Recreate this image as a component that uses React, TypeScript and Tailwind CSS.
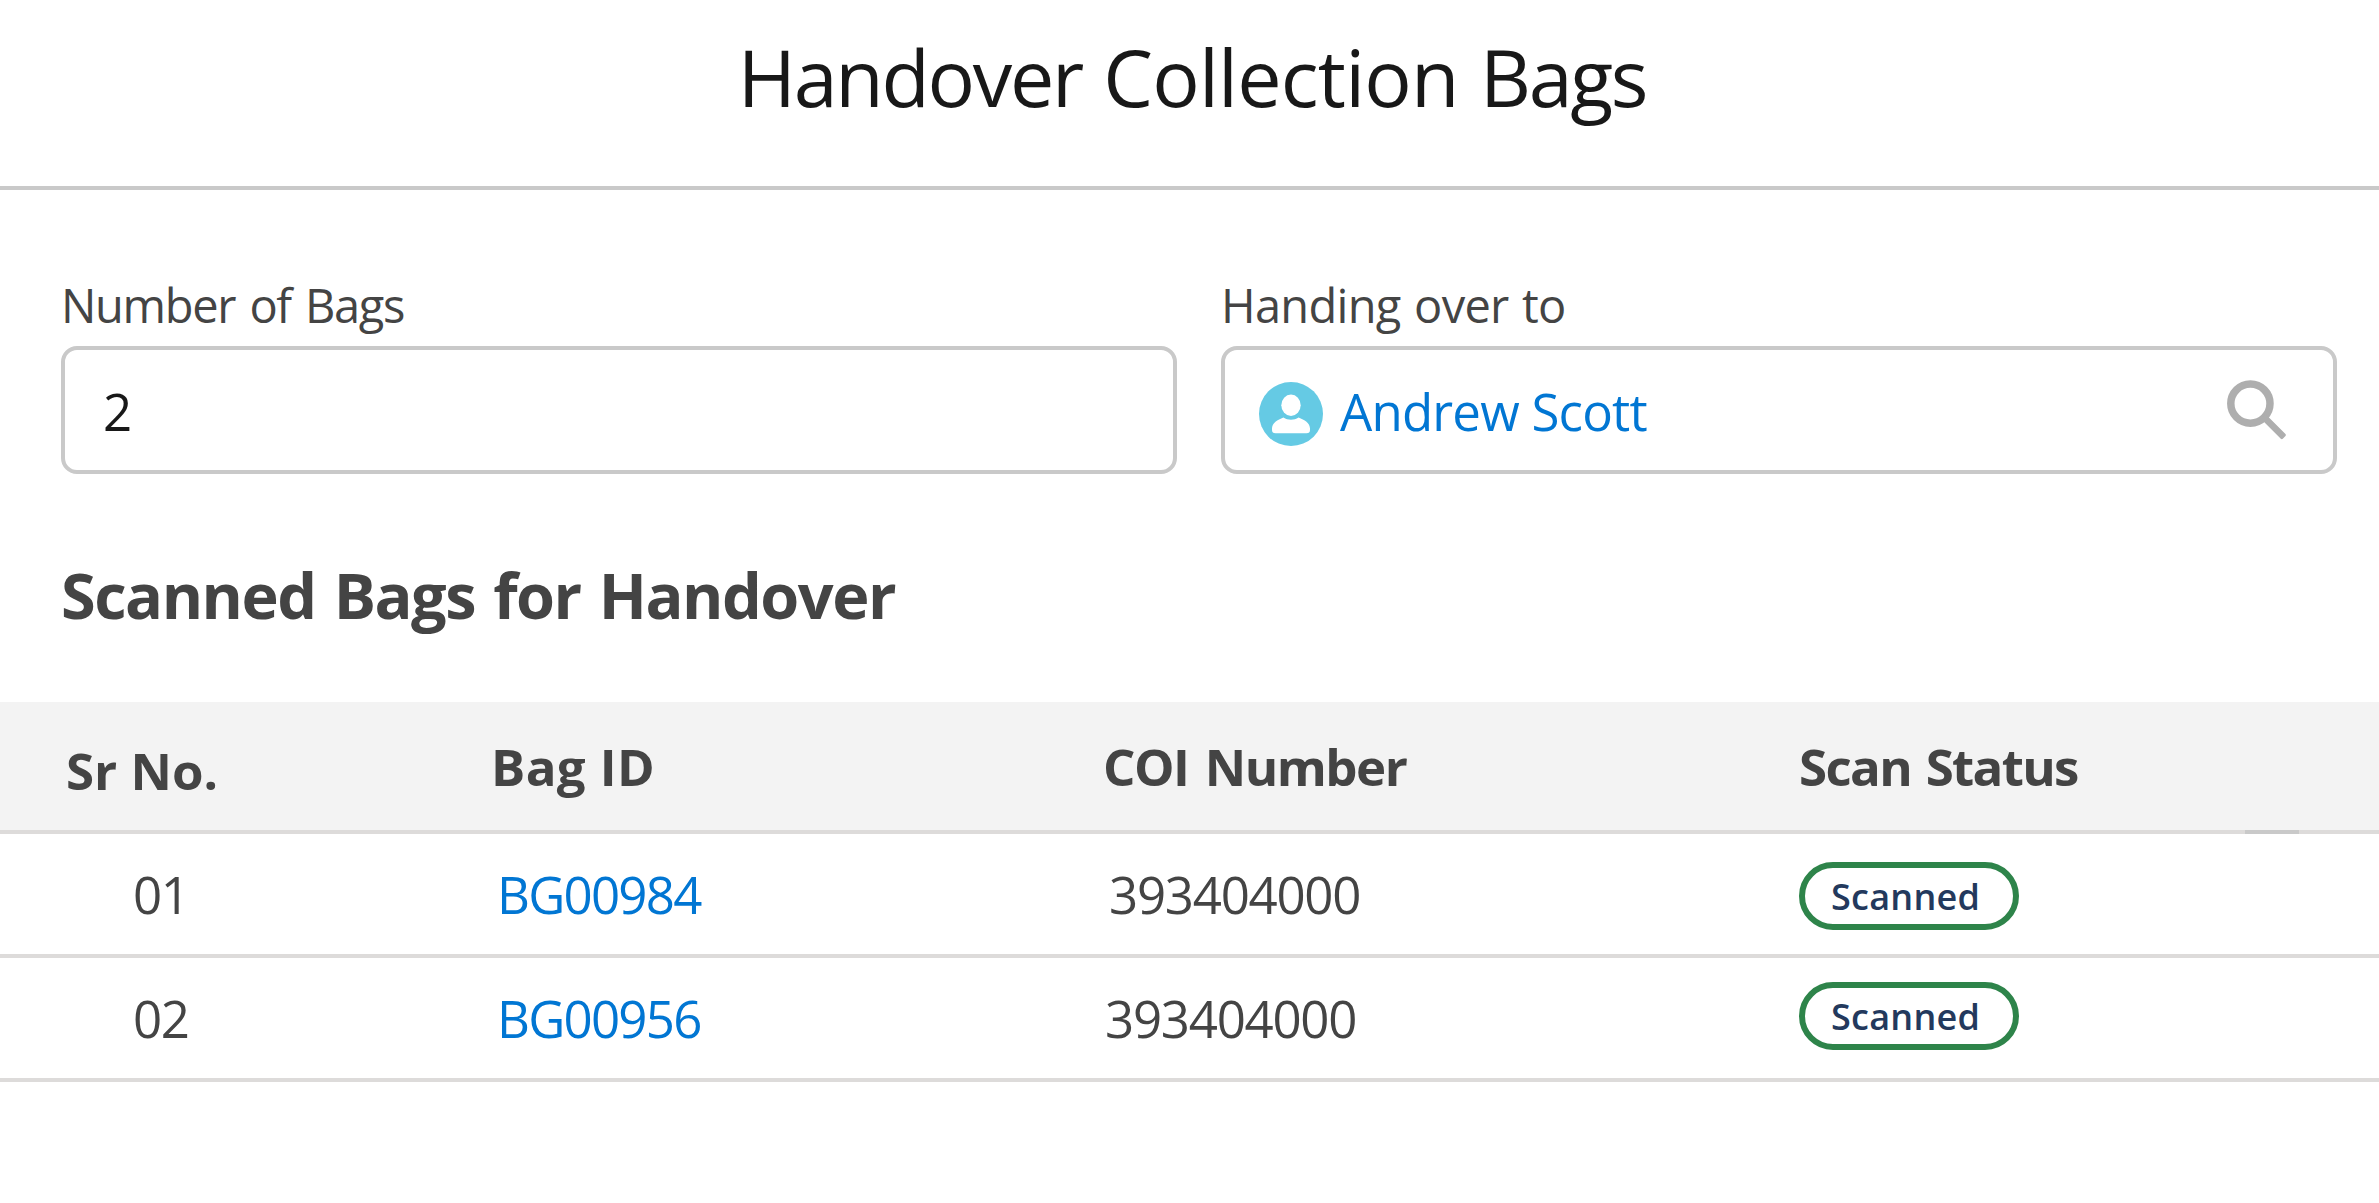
import React from "react";

type Bag = { sr: string; id: string; coi: string; coiPad: string; pillShift: string };

const bags: Bag[] = [
  { sr: "01", id: "BG00984", coi: "393404000", coiPad: "pl-[6px]", pillShift: "mt-1" },
  { sr: "02", id: "BG00956", coi: "393404000", coiPad: "pl-[2px]", pillShift: "-mt-1" },
];

function UserAvatar() {
  return (
    <svg viewBox="0 0 64 64" className="mt-2 size-16 shrink-0" aria-hidden="true">
      <circle cx="32" cy="32" r="32" fill="#65cae4" />
      <ellipse cx="32" cy="23.2" rx="9.7" ry="10.7" fill="#fff" />
      <path
        fill="#fff"
        d="M24.4 35.4C29 38.4 35 38.4 39.6 35.4C45.5 37.6 51 41 51 46.5V48Q51 51.3 47.5 51.3H16.5Q13 51.3 13 48V46.5C13 41 18.5 37.6 24.4 35.4Z"
      />
    </svg>
  );
}

function SearchIcon() {
  return (
    <svg viewBox="0 0 60 60" className="ml-auto size-[60px] shrink-0" aria-hidden="true">
      <circle cx="23.4" cy="23.6" r="19.6" fill="none" stroke="#aeaeae" strokeWidth="7.5" />
      <rect x="18" y="-3.3" width="29.7" height="6.6" rx="1.4" transform="translate(23.4 23.6) rotate(45)" fill="#aeaeae" />
    </svg>
  );
}

function Field({ label, tracking, children }: { label: string; tracking: string; children: React.ReactNode }) {
  return (
    <div className="flex flex-col">
      <div className={`text-[47px] leading-[56px] text-[#444] ${tracking}`}>{label}</div>
      <div className="mt-[13px] flex h-32 items-center rounded-[16px] border-4 border-[#c9c9c9] text-[51px]">{children}</div>
    </div>
  );
}

const columns = "grid grid-cols-[490px_613px_696px_1fr] items-center";

export default function App() {
  return (
    <div className="flex h-[1203px] w-[2379px] flex-col overflow-hidden bg-white font-['Open_Sans',sans-serif] whitespace-nowrap text-[#444]">
      <header className="flex h-[190px] justify-center border-b-4 border-[#c9c9c9] pt-[37px] pl-[5px]">
        <h1 className="text-[79px] leading-[80px] tracking-[-2.3px] text-[#181818] [word-spacing:3px]">
          Handover <span className="tracking-[-0.8px]">Collection</span> Bags
        </h1>
      </header>

      <section className="grid grid-cols-[1116px_1116px] gap-x-11 pt-[87px] pl-[61px]">
        <Field label="Number of Bags" tracking="tracking-[-1.3px] [word-spacing:3.2px]">
          <span className="pt-0.5 pl-[38px] text-[#181818]">2</span>
        </Field>
        <Field label="Handing over to" tracking="tracking-[-0.7px] [word-spacing:1.9px]">
          <div className="flex grow items-center pr-[46px] pl-[34px]">
            <UserAvatar />
            <a className="ml-[17px] pt-0.5 tracking-[-0.8px] text-[#0176d3]">Andrew Scott</a>
            <SearchIcon />
          </div>
        </Field>
      </section>

      <h2 className="mt-[85px] pl-[61px] text-[63px] leading-[72px] font-bold tracking-[-1.5px] [word-spacing:3.3px]">
        Scanned Bags for Handover
      </h2>

      <section className="mt-[71px] text-[51px]">
        <div className={`${columns} relative h-[132px] border-b-4 border-[#dddbda] bg-[#f3f3f3] font-bold`}>
          <div className="pt-2 pl-[66px]">Sr No.</div>
          <div className="pl-px tracking-[0.4px]">Bag ID</div>
          <div className="tracking-[-1.5px] [word-spacing:4.5px]">COI Number</div>
          <div className="tracking-[-1.65px] [word-spacing:3px]">Scan Status</div>
          <div className="absolute right-20 -bottom-1 h-1 w-[54px] bg-[#c9c9c9]" />
        </div>
        {bags.map((bag) => (
          <div key={bag.sr} className={`${columns} h-[124px] border-b-4 border-[#dddbda]`}>
            <div className="pl-[133px] tracking-[-1.3px]">{bag.sr}</div>
            <a className="pl-[7px] tracking-[-1.75px] text-[#0176d3]">{bag.id}</a>
            <div className={`tracking-[-1.25px] ${bag.coiPad}`}>{bag.coi}</div>
            <div
              className={`flex h-[68px] w-[220px] items-center rounded-full border-[6px] border-[#2e844a] pt-0.5 pl-[26px] text-[36px] leading-none font-semibold tracking-[0.25px] text-[#23395d] ${bag.pillShift}`}
            >
              Scanned
            </div>
          </div>
        ))}
      </section>
    </div>
  );
}
